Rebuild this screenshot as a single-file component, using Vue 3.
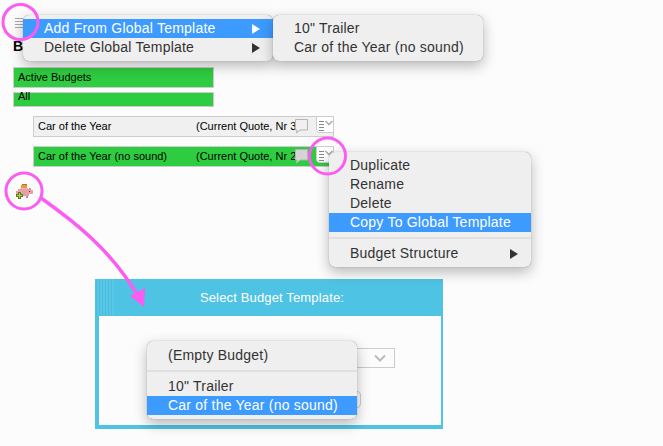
<template>
  <div class="page">
    <div class="toolbar">
      <div class="burger"><i></i><i></i><i></i><i></i></div>
      <h1 class="title">B</h1>

      <div class="menu global-menu">
        <div
          v-for="item in globalItems"
          :key="item.label"
          class="menu-item"
          :class="{ active: item.active }"
        >
          <span>{{ item.label }}</span>
          <span class="arrow"></span>
        </div>
      </div>
      <div class="menu sub-menu">
        <div class="menu-item">10" Trailer</div>
        <div class="menu-item">Car of the Year (no sound)</div>
      </div>
    </div>

    <div class="filter filter-active">Active Budgets</div>
    <div class="filter filter-all">All</div>

    <div class="budgets">
      <div v-for="b in budgets" :key="b.name" class="budget" :class="{ selected: b.selected }">
        <div class="budget-box">
          <span class="budget-name">{{ b.name }}</span>
          <span class="budget-quote">{{ b.quote }}</span>
          <svg class="bubble" width="15" height="15" viewBox="0 0 15 15">
            <path d="M2.500 .500h12v10.500H7l-3.500 3 .5-3H2.500z" />
          </svg>
        </div>
        <div class="list-btn">
          <div class="burger small"><i></i><i></i><i></i><i></i></div>
          <svg width="9" height="6" viewBox="0 0 9 6">
            <path d="M.5 .7l4 4 4-4" fill="none" stroke="#a6a6a6" stroke-width="1.500" />
          </svg>
        </div>
      </div>

      <div class="menu context-menu">
        <div class="menu-item">Duplicate</div>
        <div class="menu-item">Rename</div>
        <div class="menu-item">Delete</div>
        <div class="menu-item active">Copy To Global Template</div>
        <div class="menu-sep"></div>
        <div class="menu-item"><span>Budget Structure</span><span class="arrow"></span></div>
      </div>
    </div>

    <svg class="piggy" width="18" height="17" viewBox="0 0 18 17">
      <rect x="7" y="0" width="5" height="1" fill="#b5742c" />
      <rect x="6" y="1" width="6" height="3" fill="#e79a3c" />
      <rect x="3" y="5" width="11" height="7" fill="#e8a0a8" />
      <rect x="1" y="7" width="2" height="4" fill="#e8a0a8" />
      <rect x="14" y="4" width="2" height="2" fill="#e08c96" />
      <rect x="14" y="6" width="4" height="4" fill="#e8a0a8" />
      <rect x="5" y="4" width="8" height="1" fill="#eeb4ba" />
      <rect x="14" y="7" width="1" height="1" fill="#553333" />
      <rect x="11" y="12" width="2" height="2" fill="#d4848e" />
      <rect x="1" y="10" width="7" height="3" fill="#5d7a22" />
      <rect x="3" y="8" width="3" height="7" fill="#5d7a22" />
      <rect x="2" y="11" width="5" height="1" fill="#a6e04a" />
      <rect x="4" y="9" width="1" height="5" fill="#a6e04a" />
    </svg>

    <div class="dialog">
      <div class="dialog-head">
        <div class="stripes"></div>
        Select Budget Template:
      </div>
      <div class="dialog-body">
        <div class="select">
          <svg width="12" height="8" viewBox="0 0 12 8">
            <path d="M1 1.500l5 5 5-5" fill="none" stroke="#bbb" stroke-width="2" />
          </svg>
        </div>
        <div class="ok-btn"></div>
        <div class="menu template-menu">
          <div class="menu-item">(Empty Budget)</div>
          <div class="menu-sep"></div>
          <div class="menu-item">10" Trailer</div>
          <div class="menu-item active">Car of the Year (no sound)</div>
        </div>
      </div>
    </div>

    <svg class="marks" width="663" height="446" viewBox="0 0 663 446">
      <g fill="none" stroke="#fb5cf2" stroke-width="3">
        <circle cx="20.500" cy="22" r="17.500" />
        <circle cx="327.500" cy="156" r="18" />
        <circle cx="24" cy="191" r="18" />
        <path d="M41 198C72 220 112 250 139 298" stroke-width="3.500" />
      </g>
      <path d="M130 296L145 288L144 307z" fill="#fb5cf2" />
    </svg>
  </div>
</template>

<script setup>
const globalItems = [
  { label: "Add From Global Template", active: true },
  { label: "Delete Global Template", active: false },
];

const budgets = [
  { name: "Car of the Year", quote: "(Current Quote, Nr 3,", selected: false },
  { name: "Car of the Year (no sound)", quote: "(Current Quote, Nr 2,", selected: true },
];
</script>

<style>
body {
  background: #fcfcfc;
  overflow: hidden;
}
</style>

<style scoped>
.page {
  position: relative;
  width: 663px;
  height: 446px;
  overflow: hidden;
  box-sizing: border-box;
  padding: 18px 0 0 13px;
  font-family: "Liberation Sans", Arial, sans-serif;
  font-size: 11px;
  color: #000;
  background: #fcfcfc;
}

.toolbar {
  height: 49px;
}

.burger {
  display: flex;
  flex-direction: column;
  gap: 2px;
  width: 8px;
  margin-left: 2px;
}

.burger i {
  display: block;
  height: 1px;
  background: #a8a8a8;
}

.burger.small {
  width: 6px;
  margin: 0;
  gap: 2px;
}

.burger.small i {
  background: #888;
}

.title {
  margin: 0;
  padding-top: 10px;
  font-size: 14px;
  line-height: 16px;
  font-weight: bold;
}

.menu {
  position: absolute;
  z-index: 2;
  box-sizing: border-box;
  padding: 4px 0;
  background: #efefef;
  border-radius: 6px;
  box-shadow: 0 0 1px rgba(0, 0, 0, 0.45), 0 5px 14px rgba(0, 0, 0, 0.28);
  font-size: 14px;
  letter-spacing: 0.22px;
  color: #333;
}

.menu-item {
  display: flex;
  justify-content: space-between;
  align-items: center;
  height: 19px;
  line-height: 19px;
  padding: 0 13px 0 21px;
  white-space: nowrap;
}

.menu-item.active {
  background: #3d9bff;
  color: #fff;
}

.menu-sep {
  height: 2px;
  margin: 5px 0;
  background: #e0e0e0;
}

.arrow {
  width: 0;
  height: 0;
  border-left: 8px solid #333;
  border-top: 5px solid transparent;
  border-bottom: 5px solid transparent;
}

.active .arrow {
  border-left-color: #fff;
}

.global-menu {
  left: 23px;
  top: 15px;
  width: 250px;
}

.sub-menu {
  left: 273px;
  top: 15px;
  width: 210px;
}

.filter {
  box-sizing: border-box;
  width: 201px;
  border: 1px solid #ccc;
  background: #2ecc40;
  padding-left: 4px;
}

.filter-active {
  height: 21px;
  line-height: 19px;
}

.filter-all {
  height: 15px;
  line-height: 7px;
  margin-top: 4px;
}

.budgets {
  display: flex;
  flex-direction: column;
  gap: 9px;
  margin: 9px 0 0 20px;
}

.budget {
  display: flex;
  width: 301px;
  height: 21px;
}

.budget-box {
  display: flex;
  position: relative;
  box-sizing: border-box;
  width: 301px;
  height: 21px;
  border: 1px solid #ccc;
  background: #f0f0f0;
  line-height: 19px;
  overflow: hidden;
}

.selected .budget-box {
  background: #2ecc40;
}

.budget-name {
  width: 158px;
  padding-left: 4px;
  box-sizing: content-box;
  white-space: nowrap;
}

.budget-quote {
  white-space: nowrap;
}

.bubble {
  position: absolute;
  left: 259px;
  top: 2px;
  fill: #f0f0f0;
  stroke: #b4b4b4;
}

.selected .bubble {
  fill: #d4d4d4;
}

.list-btn {
  display: flex;
  align-items: flex-start;
  gap: 1px;
  box-sizing: border-box;
  width: 18px;
  height: 17px;
  margin-left: -18px;
  padding: 4px 0 0 2px;
  position: relative;
  background: #fff;
  border: 1px solid #ccc;
  border-radius: 0 0 0 4px;
}

.list-btn svg {
  margin-top: -1px;
}

.context-menu {
  left: 329px;
  top: 152px;
  width: 202px;
}

.piggy {
  display: block;
  margin: 17px 0 0 2px;
}

.dialog {
  box-sizing: border-box;
  width: 348px;
  height: 150px;
  margin: 78px 0 0 82px;
  border: solid #4fc3e3;
  border-width: 0 2px 4px 4px;
  background: #fcfcfc;
}

.dialog-head {
  position: relative;
  height: 37px;
  margin: 0 -2px 0 -4px;
  padding-left: 6px;
  background: #4fc3e3;
  color: #fff;
  font-size: 13px;
  line-height: 38px;
  letter-spacing: 0.15px;
  text-align: center;
}

.stripes {
  position: absolute;
  left: 1px;
  top: 0;
  width: 18px;
  height: 36px;
  background: repeating-linear-gradient(
    90deg,
    #47bcdd 0,
    #47bcdd 1px,
    #58c8e6 1px,
    #58c8e6 3px
  );
}

.dialog-body {
  display: flex;
  flex-direction: column;
  align-items: flex-start;
  padding: 32px 0 0 126px;
}

.select {
  display: flex;
  align-items: center;
  justify-content: flex-end;
  box-sizing: border-box;
  width: 170px;
  height: 20px;
  padding-right: 8px;
  border: 1px solid #ccc;
  background: #fcfcfc;
}

.ok-btn {
  width: 80px;
  height: 17px;
  margin-top: 23px;
  margin-left: 56px;
  box-sizing: border-box;
  border: 1px solid #ccc;
  border-radius: 4px;
}

.template-menu {
  left: 147px;
  top: 341px;
  width: 210px;
  padding-top: 5px;
}

.marks {
  position: absolute;
  left: 0;
  top: 0;
  z-index: 3;
  pointer-events: none;
}
</style>
